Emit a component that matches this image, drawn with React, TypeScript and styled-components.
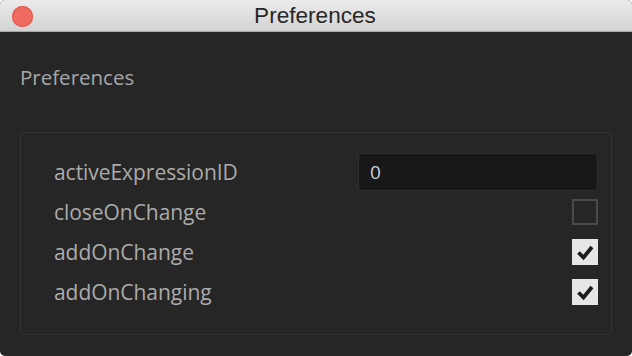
import React from "react";
import styled, { createGlobalStyle } from "styled-components";

const Global = createGlobalStyle`
  html, body { margin: 0; padding: 0; background: #ffffff; }
  #root { width: 632px; height: 356px; }
`;

const Window = styled.div`
  width: 632px;
  height: 356px;
  border-radius: 5px;
  overflow: hidden;
  background: #262626;
  display: flex;
  flex-direction: column;
`;

const TitleBar = styled.div`
  position: relative;
  height: 31px;
  flex: 0 0 31px;
  background: linear-gradient(#ebebeb, #d3d3d3);
  border-bottom: 1px solid #a8a8a8;
  display: flex;
  align-items: center;
  justify-content: center;
`;

const CloseDot = styled.span`
  position: absolute;
  left: 12px;
  top: 6px;
  width: 21px;
  height: 21px;
  border-radius: 50%;
  background: #ef6a5f;
  box-shadow: inset 0 0 0 1px #dc5a4f;
`;

const Title = styled.div`
  font-family: "Liberation Sans", Arial, sans-serif;
  font-size: 22.6px;
  color: #272727;
  line-height: 31px;
  margin-left: -2px;
`;

const Content = styled.div`
  flex: 1;
  padding: 31px 20px 0 20px;
  display: flex;
  flex-direction: column;
`;

const Heading = styled.h1`
  margin: 0;
  font-family: "Open Sans", sans-serif;
  font-weight: 400;
  font-size: 20.5px;
  line-height: 28px;
  color: #a6a6a6;
  padding-left: 0;
`;

const Group = styled.div`
  margin-top: 41px;
  height: 203px;
  box-sizing: border-box;
  border: 1.5px solid #333333;
  border-radius: 4px;
  padding: 19px 13px 0 33px;
  display: flex;
  flex-direction: column;
`;

const Row = styled.div`
  height: 40px;
  display: flex;
  align-items: center;
  justify-content: space-between;
`;

const Label = styled.span`
  font-family: "Open Sans", sans-serif;
  font-size: 21px;
  color: #ababab;
  letter-spacing: -0.05px;
`;

const TextInput = styled.div`
  width: 240px;
  height: 38px;
  box-sizing: border-box;
  background: #181818;
  border: 1.5px solid #303030;
  border-radius: 4px;
  padding-left: 11px;
  display: flex;
  align-items: center;
  font-family: "Open Sans", sans-serif;
  font-size: 19px;
  color: #c8d0d8;
`;

const Box = styled.span<{ $checked?: boolean }>`
  width: 26px;
  height: 26px;
  box-sizing: border-box;
  display: flex;
  align-items: center;
  justify-content: center;
  background: ${(p) => (p.$checked ? "#e6e6e6" : "#262626")};
  border: ${(p) => (p.$checked ? "none" : "2px solid #4a4a4a")};
`;

const Check = () => (
  <svg width="26" height="26" viewBox="0 0 26 26">
    <path d="M6.5 13.5 L11.5 18.5 L20 8" fill="none" stroke="#1c1c1c" strokeWidth="3.8" strokeLinecap="butt" strokeLinejoin="miter" />
  </svg>
);

const Checkbox = ({ checked }: { checked?: boolean }) => (
  <Box $checked={checked}>{checked ? <Check /> : null}</Box>
);

export default function App() {
  return (
    <>
      <Global />
      <Window>
        <TitleBar>
          <CloseDot />
          <Title>Preferences</Title>
        </TitleBar>
        <Content>
          <Heading>Preferences</Heading>
          <Group>
            <Row>
              <Label>activeExpressionID</Label>
              <TextInput>0</TextInput>
            </Row>
            <Row>
              <Label>closeOnChange</Label>
              <Checkbox />
            </Row>
            <Row>
              <Label>addOnChange</Label>
              <Checkbox checked />
            </Row>
            <Row>
              <Label>addOnChanging</Label>
              <Checkbox checked />
            </Row>
          </Group>
        </Content>
      </Window>
    </>
  );
}
